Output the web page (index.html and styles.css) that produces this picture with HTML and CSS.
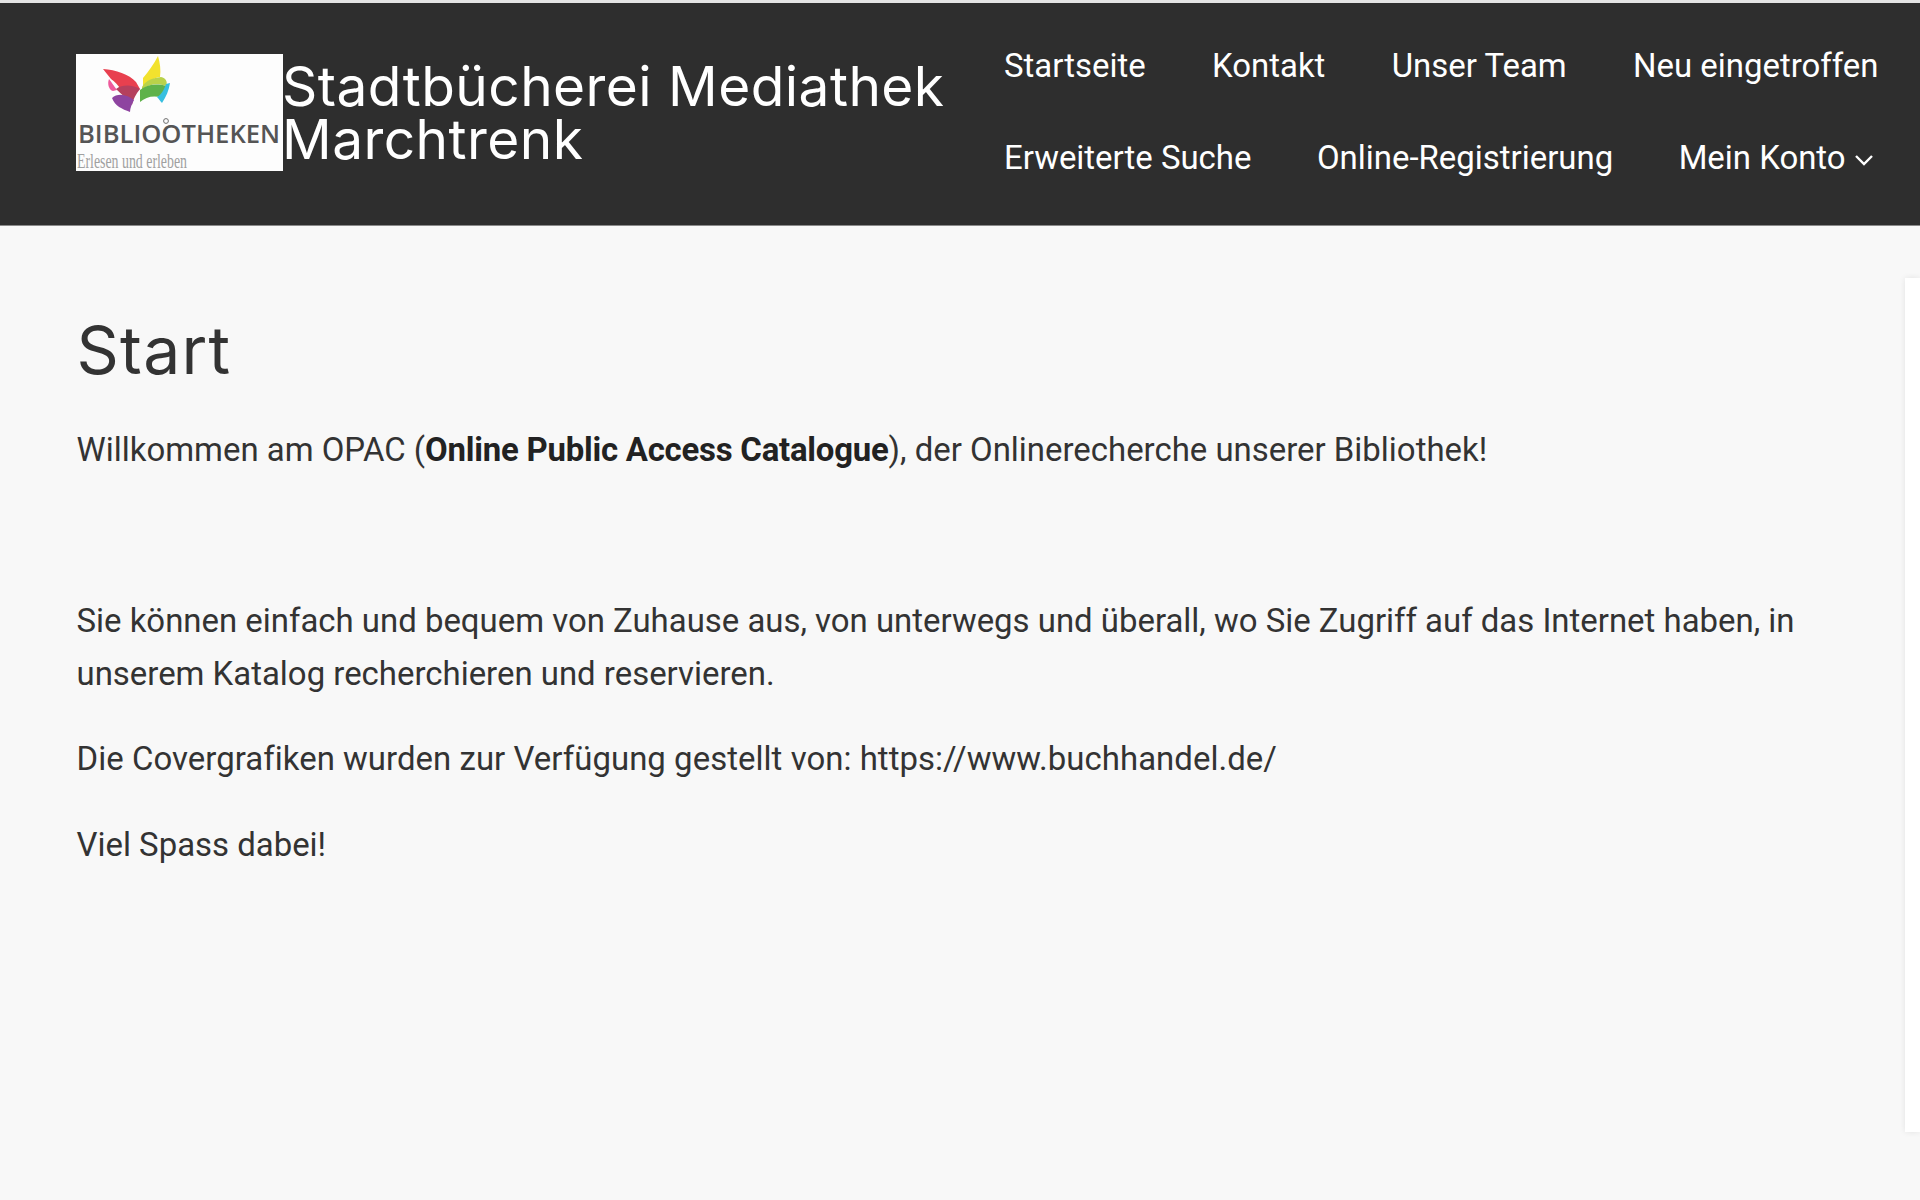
FILE: index.html
```html
<!DOCTYPE html>
<html lang="de">
<head>
<meta charset="utf-8">
<title>Stadtbücherei Mediathek Marchtrenk</title>
<link rel="stylesheet" href="styles.css">
</head>
<body>
<header class="site-header">
  <a class="brand" href="#">
    <span class="logo">
      <svg class="logo-svg" viewBox="0 0 207 117" width="207" height="117" aria-hidden="true">
        <rect width="207" height="117" fill="#fdfdfd"/>
        <path d="M27 15 C40 16 53 20 60 28 L64 35 C58 38 55 44 54 50 C49 40 42 30 35 25 Z" fill="#e8404f"/>
        <path d="M33 25 C36 29 38 32 41 36 L37 37 C33 36 31 30 33 25 Z" fill="#ee5a9c"/>
        <path d="M40 35 C47 30 57 31 64 35 C60 40 57 45 56 51 C52 45 46 41 40 35 Z" fill="#b5405e"/>
        <path d="M36 44 C42 38 52 41 58 46 C56 50 54 54 54 58 C46 55 39 52 36 44 Z" fill="#8e44a0"/>
        <path d="M67 24 C72 18 78 10 82 2 C84 9 85 16 84 23 C77 24 71 28 67 36 Z" fill="#f2e22e"/>
        <path d="M66 33 C70 26 77 24 85 23 C90 24 92 28 90 32 C82 29 72 30 66 36 Z" fill="#b9d24a"/>
        <path d="M64 36 C70 31 80 29 90 32 C90 37 88 42 86 44 C78 41 70 43 64 48 Z" fill="#5fb24a"/>
        <path d="M90 30 L94 29 C93 36 90 43 86 49 C84 47 83 45 81 43 C85 41 88 36 90 30 Z" fill="#37bfe0"/>
        <text class="logo-word" x="2" y="89" textLength="202" lengthAdjust="spacingAndGlyphs">BIBLIOOTHEKEN</text>
        <circle cx="90" cy="67" r="2.4" fill="none" stroke="#6e6e6e" stroke-width="1"/>
        <text class="logo-sub" transform="translate(1 114) scale(.66 1)">Erlesen und erleben</text>
      </svg>
    </span>
    <span class="brand-name">Stadtbücherei Mediathek Marchtrenk</span>
  </a>
  <nav class="main-nav">
    <ul class="nav-row nav-row-wide">
      <li><a href="#">Startseite</a></li>
      <li><a href="#">Kontakt</a></li>
      <li><a href="#">Unser Team</a></li>
      <li><a href="#">Neu eingetroffen</a></li>
    </ul>
    <ul class="nav-row">
      <li><a href="#">Erweiterte Suche</a></li>
      <li><a href="#">Online-Registrierung</a></li>
      <li><a href="#">Mein Konto<svg class="chevron" viewBox="0 0 20 12" width="20" height="12" aria-hidden="true"><path d="M2 2 L10 10 L18 2" fill="none" stroke="#fff" stroke-width="2.4"/></svg></a></li>
    </ul>
  </nav>
</header>
<div class="page">
  <main class="content">
    <h1 class="page-title">Start</h1>
    <p>Willkommen am OPAC (<strong>Online Public Access Catalogue</strong>), der Onlinerecherche unserer Bibliothek!</p>
    <p class="spacer">&nbsp;</p>
    <p>Sie können einfach und bequem von Zuhause aus, von unterwegs und überall, wo Sie Zugriff auf das Internet haben, in unserem Katalog recherchieren und reservieren.</p>
    <p class="tight">Die Covergrafiken wurden zur Verfügung gestellt von: https://www.buchhandel.de/</p>
    <p>Viel Spass dabei!</p>
  </main>
  <aside class="side-panel"></aside>
</div>
</body>
</html>
```
FILE: styles.css
```css
* { box-sizing: border-box; }
html, body { margin: 0; height: 100%; }
body {
  background: #f8f8f8;
  color: #333;
  font-family: Roboto, "Liberation Sans", sans-serif;
  font-size: 32.93px;
  line-height: 53px;
  overflow: hidden;
  border-top: 3px solid #e4e4e4;
}
a { color: inherit; text-decoration: none; }
.site-header {
  display: flex;
  justify-content: space-between;
  align-items: flex-start;
  height: 223px;
  padding: 51px 0 0 76px;
  background: #2e2e2e;
  color: #fff;
  border-bottom: 1px solid #8a8a8a;
}
.brand { display: flex; align-items: center; height: 117px; flex: none; }
.logo, .logo-svg { display: block; width: 207px; height: 117px; }
.brand-name {
  width: 700px;
  margin-left: -1px;
  font-family: Inter, "Open Sans", sans-serif;
  font-size: 55px;
  line-height: 53px;
  font-weight: 400;
  letter-spacing: 0.45px;
}
.logo-word {
  font-family: "Open Sans", sans-serif;
  font-size: 25px;
  font-weight: 600;
  fill: #555;
}
.logo-sub {
  font-family: "Liberation Serif", serif;
  font-size: 21px;
  fill: #a0a0a0;
}
.main-nav {
  display: flex;
  flex-direction: column;
  gap: 39px;
  margin-top: -15px;
  width: 916px;
  flex: none;
}
.nav-row {
  display: flex;
  gap: 65.5px;
  list-style: none;
  margin: 0;
  padding: 0;
  white-space: nowrap;
  line-height: 53px;
  height: 53px;
}
.nav-row-wide { gap: 66.4px; }
.chevron { margin-left: 8px; width: 20px; height: 12px; vertical-align: 3px; }
.page { display: flex; }
.content { flex: 1; padding: 0 0 0 76.5px; max-width: 1830px; }
.page-title {
  margin: 86px 0 0;
  font-family: Inter, "Open Sans", sans-serif;
  font-size: 66px;
  line-height: 76px;
  font-weight: 400;
  letter-spacing: 1.2px;
}
.content p { margin: 32.5px 0 0; }
.content .page-title + p { margin-top: 35px; }
.content p.tight { margin-top: 32px; letter-spacing: 0.045px; }
.content strong { font-weight: 700; color: #222; letter-spacing: -0.23px; }
.side-panel {
  position: absolute;
  left: 1905px;
  top: 278px;
  width: 15px;
  height: 854px;
  background: #fff;
  box-shadow: 0 0 6px rgba(0,0,0,.09);
}
```
